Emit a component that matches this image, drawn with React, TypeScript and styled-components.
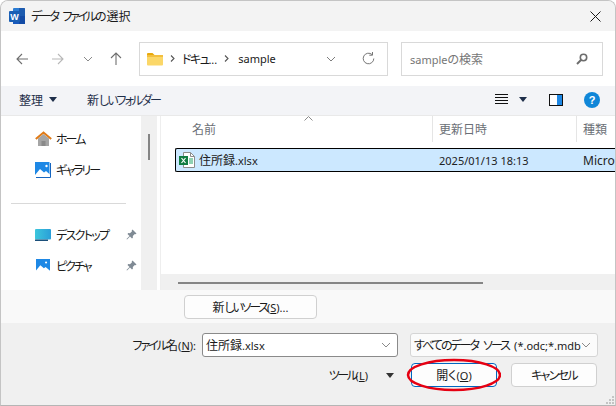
import styled, { createGlobalStyle } from 'styled-components';

const GlobalStyle = createGlobalStyle`
html, body {
  margin: 0;
  padding: 0;
  background: #ffffff;
}
* {
  box-sizing: border-box;
}
svg {
  flex: none;
}
`;

const Dialog = styled.div`
  position: relative;
  width: 616px;
  height: 406px;
  display: flex;
  flex-direction: column;
  overflow: hidden;
  border: 1px solid #c4c4c4;
  border-bottom: 1px solid #b5b5b5;
  border-radius: 8px 8px 0 0;
  background: #f0f0f0;
  font-family: "Noto Sans", "Noto Sans CJK JP", sans-serif;
  font-feature-settings: "palt";
  font-size: 12px;
  color: #1a1a1a;
`;

const Latin = styled.span`
  font-size: 11px;
`;

// the original UI font has much narrower kana than Noto
const Kana = styled.span<{ $s?: number }>`
  letter-spacing: ${(p) => p.$s ?? -1.7}px;
  word-spacing: 4px;
`;

const TitleBar = styled.div`
  height: 30px;
  flex: none;
  display: flex;
  align-items: center;
  padding: 0 14px 0 8px;
  gap: 6px;
  background: #f3f3f3;
`;

const TitleText = styled.span`
  flex: 1;
  font-size: 12px;
`;

const NavBar = styled.div`
  height: 55px;
  flex: none;
  display: flex;
  align-items: center;
  padding: 0 12px 0 15px;
  background: #ffffff;
`;

const NavIcon = styled.div<{ $w: number }>`
  width: ${(p) => p.$w}px;
  flex: none;
  display: flex;
  align-items: center;
`;

const ArrowSvg = styled.svg<{ $flip?: boolean }>`
  transform: ${(p) => (p.$flip ? 'scaleX(-1)' : 'none')};
`;

const AddressBox = styled.div`
  width: 249px;
  height: 34px;
  margin-left: 6px;
  flex: none;
  display: flex;
  align-items: center;
  padding: 0 12px 0 7px;
  border: 1px solid #d9d9d9;
`;

const Crumb = styled.span<{ $ml: number }>`
  margin-left: ${(p) => p.$ml}px;
  white-space: nowrap;
`;

const CrumbSep = styled.span`
  margin-left: 7px;
  display: flex;
`;

const Grow = styled.div`
  flex: 1;
`;

const Spaced = styled.span<{ $ml: number }>`
  margin-left: ${(p) => p.$ml}px;
  display: flex;
  align-items: center;
`;

const SearchBox = styled.div`
  width: 202px;
  height: 34px;
  margin-left: 13px;
  flex: none;
  display: flex;
  align-items: center;
  justify-content: space-between;
  padding: 0 14px 0 8px;
  border: 1px solid #d9d9d9;
  color: #767676;
`;

const Toolbar = styled.div`
  height: 30px;
  flex: none;
  display: flex;
  align-items: center;
  padding: 0 15px 2px 18px;
  background: #f3f4f7;
  border-bottom: 1px solid #e9e9e9;
  color: #1f2f4a;
`;

const ToolButton = styled.span`
  display: flex;
  align-items: center;
  gap: 6px;
  white-space: nowrap;
`;

const NewFolder = styled(ToolButton)`
  margin-left: 30px;
  display: inline;
`;

const ViewIcons = styled.div`
  margin-left: auto;
  display: flex;
  align-items: center;
`;

const Main = styled.div`
  height: 174px;
  flex: none;
  display: flex;
  background: #ffffff;
`;

const Sidebar = styled.div`
  width: 140px;
  flex: none;
  display: flex;
  flex-direction: column;
  padding-top: 7px;
  overflow: hidden;
`;

const NavRow = styled.div`
  height: 31px;
  flex: none;
  display: flex;
  align-items: center;
  padding-left: 34px;
  gap: 5px;
  white-space: nowrap;
`;

const NavIconSlot = styled.span`
  width: 16px;
  flex: none;
  display: flex;
  align-items: center;
  justify-content: center;
`;

const PinSlot = styled.span`
  margin-left: auto;
  margin-right: 4px;
  display: flex;
`;

const SideDivider = styled.div`
  height: 1px;
  margin: 18px 15px 15px 10px;
  flex: none;
  background: #d9d9d9;
`;

const SideScroll = styled.div`
  width: 16px;
  flex: none;
  padding: 18px 0 0 7px;
  background: #f0f0f0;
`;

const SideThumb = styled.div`
  width: 2px;
  height: 26px;
  background: #858585;
`;

const ListPane = styled.div`
  position: relative;
  flex: 1;
  min-width: 0;
  margin-left: 3px;
  display: flex;
  flex-direction: column;
  border-left: 1px solid #eeeeee;
  overflow: hidden;
`;

const ListHeader = styled.div`
  height: 26px;
  flex: none;
  display: grid;
  grid-template-columns: 272px 144px 1fr;
  color: #6b6f76;
`;

const HeadCell = styled.div<{ $pad: number; $line?: boolean }>`
  display: flex;
  align-items: center;
  padding-left: ${(p) => p.$pad}px;
  border-right: ${(p) => (p.$line ? '1px solid #e5e5e5' : 'none')};
`;

const SortArrow = styled.svg`
  position: absolute;
  left: 143px;
  top: 0;
`;

const ListBody = styled.div`
  flex: 1;
  padding: 6px 0 0 14px;
`;

const FileRow = styled.div`
  height: 24px;
  display: grid;
  grid-template-columns: 258px 144px 1fr;
  align-items: center;
  background: #cce8ff;
  border: 1px solid #000000;
  border-right: none;
  border-radius: 2px 0 0 2px;
  white-space: nowrap;
  color: #222222;
`;

const FileName = styled.div`
  display: flex;
  align-items: center;
  gap: 4px;
  padding-left: 3px;
`;

const FileCell = styled.div`
  padding-left: 5px;
  overflow: hidden;
`;

const HScroll = styled.div`
  height: 16px;
  flex: none;
  padding: 8px 0 0 17px;
  background: #f0f0f0;
`;

const HThumb = styled.div`
  width: 305px;
  height: 2px;
  background: #858585;
`;

const SourceRow = styled.div`
  height: 33px;
  flex: none;
  display: flex;
  align-items: flex-start;
  padding: 5px 0 0 183px;
  background: #f9f9f9;
`;

const Button = styled.div<{ $w: number; $primary?: boolean }>`
  width: ${(p) => p.$w}px;
  height: 24px;
  flex: none;
  display: flex;
  align-items: center;
  justify-content: center;
  background: #fdfdfd;
  border: 1px solid ${(p) => (p.$primary ? '#0067c0' : '#d0d0d0')};
  border-radius: 4px;
  white-space: nowrap;
`;

const Footer = styled.div`
  position: relative;
  flex: 1;
  display: flex;
  flex-direction: column;
  padding: 10px 17px 0 0;
  background: #f0f0f0;
`;

const FieldRow = styled.div`
  display: flex;
  align-items: center;
  justify-content: flex-end;
`;

const FieldLabel = styled.span`
  margin-right: 6px;
  white-space: nowrap;
`;

const Combo = styled.div<{ $w: number; $dark?: boolean }>`
  width: ${(p) => p.$w}px;
  height: 24px;
  flex: none;
  display: flex;
  align-items: center;
  justify-content: space-between;
  padding: 0 6px 0 3px;
  background: #ffffff;
  border: 1px solid ${(p) => (p.$dark ? '#8a8a8a' : '#d5d5d5')};
  border-radius: 3px;
  white-space: nowrap;
  overflow: hidden;
`;

const FilterCombo = styled(Combo)`
  margin-left: 12px;
  background: #fbfbfb;
`;

const ActionRow = styled(FieldRow)`
  margin-top: 6px;
  padding-right: 1px;
`;

const ToolsMenu = styled.span`
  margin-right: 17px;
  display: flex;
  align-items: center;
  gap: 18px;
  white-space: nowrap;
`;

const ButtonGap = styled.div`
  width: 14px;
  flex: none;
`;

const Highlight = styled.svg`
  position: absolute;
  left: 405px;
  top: 35px;
`;

const Grip = styled.svg`
  position: absolute;
  right: 1px;
  bottom: 1px;
`;

const Mnemonic = styled.span`
  text-decoration: underline;
`;

const Chevron = ({ color = '#6e6e6e' }: { color?: string }) => (
  <svg width="10" height="6" viewBox="0 0 10 6" fill="none">
    <path d="M1 1l4 4 4-4" stroke={color} strokeWidth="1" />
  </svg>
);

const Caret = ({ color = '#1f2f4a' }: { color?: string }) => (
  <svg width="8" height="5" viewBox="0 0 8 5">
    <path d="M0 0h8L4 5z" fill={color} />
  </svg>
);

const Arrow = ({ color, flip }: { color: string; flip?: boolean }) => (
  <ArrowSvg $flip={flip} width="13" height="12" viewBox="0 0 13 12" fill="none">
    <path d="M12 6H1M6 1L1 6l5 5" stroke={color} strokeWidth="1.1" />
  </ArrowSvg>
);

const SepIcon = () => (
  <svg width="5" height="7" viewBox="0 0 5 7" fill="none">
    <path d="M1 .5l3 3-3 3" stroke="#555555" strokeWidth="1.1" />
  </svg>
);

const Pin = () => (
  <svg width="11" height="11" viewBox="0 0 11 11">
    <path d="M6.5.5l4 4-1 .8-.7-.3-2 2 .1 1.7-.9.8-2-2L1 10.5l-.5-.5L3.5 7l-2-2 .8-.9 1.7.1 2-2-.3-.7z" fill="#7f8a94" />
  </svg>
);

const WordIcon = () => (
  <svg width="16" height="16" viewBox="0 0 16 16">
    <rect x="4" y="0" width="12" height="16" rx="1" fill="#2b7cd3" />
    <rect x="4" y="8" width="12" height="8" fill="#185abd" />
    <rect x="10" y="0" width="6" height="16" fill="#103f91" opacity="0.55" />
    <rect x="0" y="3" width="11" height="11" rx="1" fill="#1a5fb4" />
    <text x="5.5" y="11.5" textAnchor="middle" fontSize="9" fontWeight="700" fill="#ffffff" fontFamily="Liberation Sans">W</text>
  </svg>
);

const FolderIcon = () => (
  <svg width="16" height="14" viewBox="0 0 16 14">
    <path d="M0 2a1 1 0 011-1h4.5L7.5 3H0z" fill="#e8a90c" />
    <rect x="0" y="3" width="16" height="10.5" rx="1" fill="#fbd768" />
    <rect x="0" y="3" width="16" height="2" fill="#f3bf3e" />
  </svg>
);

const HomeIcon = () => (
  <svg width="17" height="16" viewBox="0 0 17 16">
    <path d="M3 7.5L8.5 3 14 7.5V15H3z" fill="#a5a5a5" />
    <rect x="6.5" y="10" width="4" height="5" fill="#8a8a8a" />
    <path d="M.8 8L8.5 1.5 16.2 8" fill="none" stroke="#e07b18" strokeWidth="2" />
  </svg>
);

const PictureIcon = ({ size, stacked }: { size: number; stacked?: boolean }) => (
  <svg width={size} height={size} viewBox="0 0 16 16">
    <rect x="0" y="0" width={stacked ? 14.5 : 16} height={stacked ? 14 : 16} fill="#1e88e5" />
    <path d="M0 13l5-6 4 3.5 2-1.5 5 4.5V16H0z" fill="#ffffff" />
    <circle cx="11.5" cy="4" r="1.2" fill="#ffffff" />
    {stacked && <path d="M15.5 1v14.5H1" fill="none" stroke="#1565c0" strokeWidth="1" />}
  </svg>
);

const DesktopIcon = () => (
  <svg width="16" height="12" viewBox="0 0 16 12">
    <defs>
      <linearGradient id="desk" x1="0" y1="0" x2="1" y2="0">
        <stop offset="0" stopColor="#3cc6dc" />
        <stop offset="1" stopColor="#2a9fd8" />
      </linearGradient>
    </defs>
    <rect width="16" height="10.5" rx="1" fill="url(#desk)" />
    <rect y="10.5" width="13" height="1.5" fill="#1b4f7a" />
  </svg>
);

const ExcelIcon = () => (
  <svg width="16" height="16" viewBox="0 0 16 16">
    <path d="M4.5.5h7l4 4v11h-11z" fill="#ffffff" stroke="#8c8c8c" />
    <path d="M11.5.5v4h4" fill="none" stroke="#8c8c8c" />
    <path d="M10 7h4M10 9h4M10 11h4" stroke="#21a366" strokeWidth="1" />
    <rect x="0" y="4" width="9" height="9" fill="#107c41" />
    <path d="M2.5 6l4 5M6.5 6l-4 5" stroke="#ffffff" strokeWidth="1.2" />
  </svg>
);

export default function App() {
  return (
    <>
      <GlobalStyle />
      <Dialog>
        <TitleBar>
          <WordIcon />
          <TitleText><Kana $s={-2.3}>データ ファイル</Kana>の選択</TitleText>
          <svg width="11" height="11" viewBox="0 0 11 11" fill="none">
            <path d="M.5.5l10 10M10.5.5l-10 10" stroke="#1a1a1a" strokeWidth="1" />
          </svg>
        </TitleBar>
        <NavBar>
          <NavIcon $w={35}><Arrow color="#6f6f6f" /></NavIcon>
          <NavIcon $w={32}><Arrow color="#b8b8b8" flip /></NavIcon>
          <NavIcon $w={27}><Chevron color="#8a8a8a" /></NavIcon>
          <NavIcon $w={23}>
            <svg width="12" height="13" viewBox="0 0 12 13" fill="none">
              <path d="M6 13V1M1 6l5-5 5 5" stroke="#6f6f6f" strokeWidth="1.1" />
            </svg>
          </NavIcon>
          <AddressBox>
            <FolderIcon />
            <CrumbSep><SepIcon /></CrumbSep>
            <Crumb $ml={7}><Kana $s={-1.5}>ドキュ</Kana><Latin>...</Latin></Crumb>
            <CrumbSep><SepIcon /></CrumbSep>
            <Crumb $ml={9}><Latin>sample</Latin></Crumb>
            <Grow />
            <Chevron color="#7d7d7d" />
            <Spaced $ml={26}>
              <svg width="13" height="13" viewBox="0 0 13 13" fill="none">
                <path d="M11.8 6.5a5.3 5.3 0 11-1.7-3.9" stroke="#767676" strokeWidth="1" />
                <path d="M10.5 0v3.2H7.3" stroke="#767676" strokeWidth="1" />
              </svg>
            </Spaced>
          </AddressBox>
          <SearchBox>
            <span><Latin>sample</Latin>の検索</span>
            <svg width="12" height="12" viewBox="0 0 12 12" fill="none">
              <circle cx="7.5" cy="4.5" r="3.2" stroke="#6d6d6d" strokeWidth="1.6" />
              <path d="M5 7l-4 4" stroke="#6d6d6d" strokeWidth="2" />
            </svg>
          </SearchBox>
        </NavBar>
        <Toolbar>
          <ToolButton>整理 <Caret /></ToolButton>
          <NewFolder>新<Kana $s={-2}>しいフォルダー</Kana></NewFolder>
          <ViewIcons>
            <svg width="13" height="11" viewBox="0 0 13 11">
              <path d="M0 .5h13M0 3.5h13M0 6.5h13M0 9.5h13" stroke="#111111" strokeWidth="1" />
            </svg>
            <Spaced $ml={11}><Caret /></Spaced>
            <Spaced $ml={22}>
              <svg width="14" height="12" viewBox="0 0 14 12">
                <rect x=".5" y=".5" width="13" height="11" fill="#ffffff" stroke="#111111" />
                <rect x="8" y="1" width="5" height="10" fill="#1e88e5" />
              </svg>
            </Spaced>
            <Spaced $ml={21}>
              <svg width="16" height="16" viewBox="0 0 16 16">
                <circle cx="8" cy="8" r="8" fill="#0f86d8" />
                <text x="8" y="12" textAnchor="middle" fontSize="11" fontWeight="700" fill="#ffffff" fontFamily="Liberation Sans">?</text>
              </svg>
            </Spaced>
          </ViewIcons>
        </Toolbar>
        <Main>
          <Sidebar>
            <NavRow><NavIconSlot><HomeIcon /></NavIconSlot><Kana $s={-2}>ホーム</Kana></NavRow>
            <NavRow><NavIconSlot><PictureIcon size={16} stacked /></NavIconSlot><Kana $s={-2}>ギャラリー</Kana></NavRow>
            <SideDivider />
            <NavRow><NavIconSlot><DesktopIcon /></NavIconSlot><Kana>デスクトップ</Kana><PinSlot><Pin /></PinSlot></NavRow>
            <NavRow><NavIconSlot><PictureIcon size={14} /></NavIconSlot><Kana $s={-2}>ピクチャ</Kana><PinSlot><Pin /></PinSlot></NavRow>
          </Sidebar>
          <SideScroll><SideThumb /></SideScroll>
          <ListPane>
            <ListHeader>
              <HeadCell $pad={31} $line>名前</HeadCell>
              <HeadCell $pad={6} $line>更新日時</HeadCell>
              <HeadCell $pad={6}>種類</HeadCell>
            </ListHeader>
            <SortArrow width="9" height="5" viewBox="0 0 9 5" fill="none">
              <path d="M.5 4.5l4-4 4 4" stroke="#8a8a8a" strokeWidth="1" />
            </SortArrow>
            <ListBody>
              <FileRow>
                <FileName><ExcelIcon /><span>住所録<Latin>.xlsx</Latin></span></FileName>
                <FileCell><Latin>2025/01/13 18:13</Latin></FileCell>
                <FileCell>Microsoft</FileCell>
              </FileRow>
            </ListBody>
            <HScroll><HThumb /></HScroll>
          </ListPane>
        </Main>
        <SourceRow>
          <Button $w={133}>新<Kana $s={-2.2}>しいソース</Kana><Latin>(<Mnemonic>S</Mnemonic>)...</Latin></Button>
        </SourceRow>
        <Footer>
          <FieldRow>
            <FieldLabel><Kana $s={-2}>ファイル</Kana>名<Latin>(<Mnemonic>N</Mnemonic>):</Latin></FieldLabel>
            <Combo $w={196} $dark><span>住所録<Latin>.xlsx</Latin></span><Chevron color="#8a8a8a" /></Combo>
            <FilterCombo $w={188}><span><Kana $s={-2}>すべてのデータ ソース </Kana><Latin>(*.odc;*.mdb</Latin></span><Chevron color="#8a8a8a" /></FilterCombo>
          </FieldRow>
          <ActionRow>
            <ToolsMenu><span><Kana $s={-2.4}>ツール</Kana><Latin>(<Mnemonic>L</Mnemonic>)</Latin></span><Caret color="#333333" /></ToolsMenu>
            <Button $w={86} $primary>開く<Latin>(<Mnemonic>O</Mnemonic>)</Latin></Button>
            <ButtonGap />
            <Button $w={86}><Kana>キャンセル</Kana></Button>
          </ActionRow>
          <Highlight width="95" height="34" viewBox="0 0 95 34" fill="none">
            <ellipse cx="48" cy="17" rx="46" ry="15" stroke="#e60012" strokeWidth="2.5" />
          </Highlight>
          <Grip width="9" height="9" viewBox="0 0 9 9">
            <path d="M7 1h2v2H7zM4 4h2v2H4zM7 4h2v2H7zM1 7h2v2H1zM4 7h2v2H4zM7 7h2v2H7z" fill="#c4c4c4" />
          </Grip>
        </Footer>
      </Dialog>
    </>
  );
}
